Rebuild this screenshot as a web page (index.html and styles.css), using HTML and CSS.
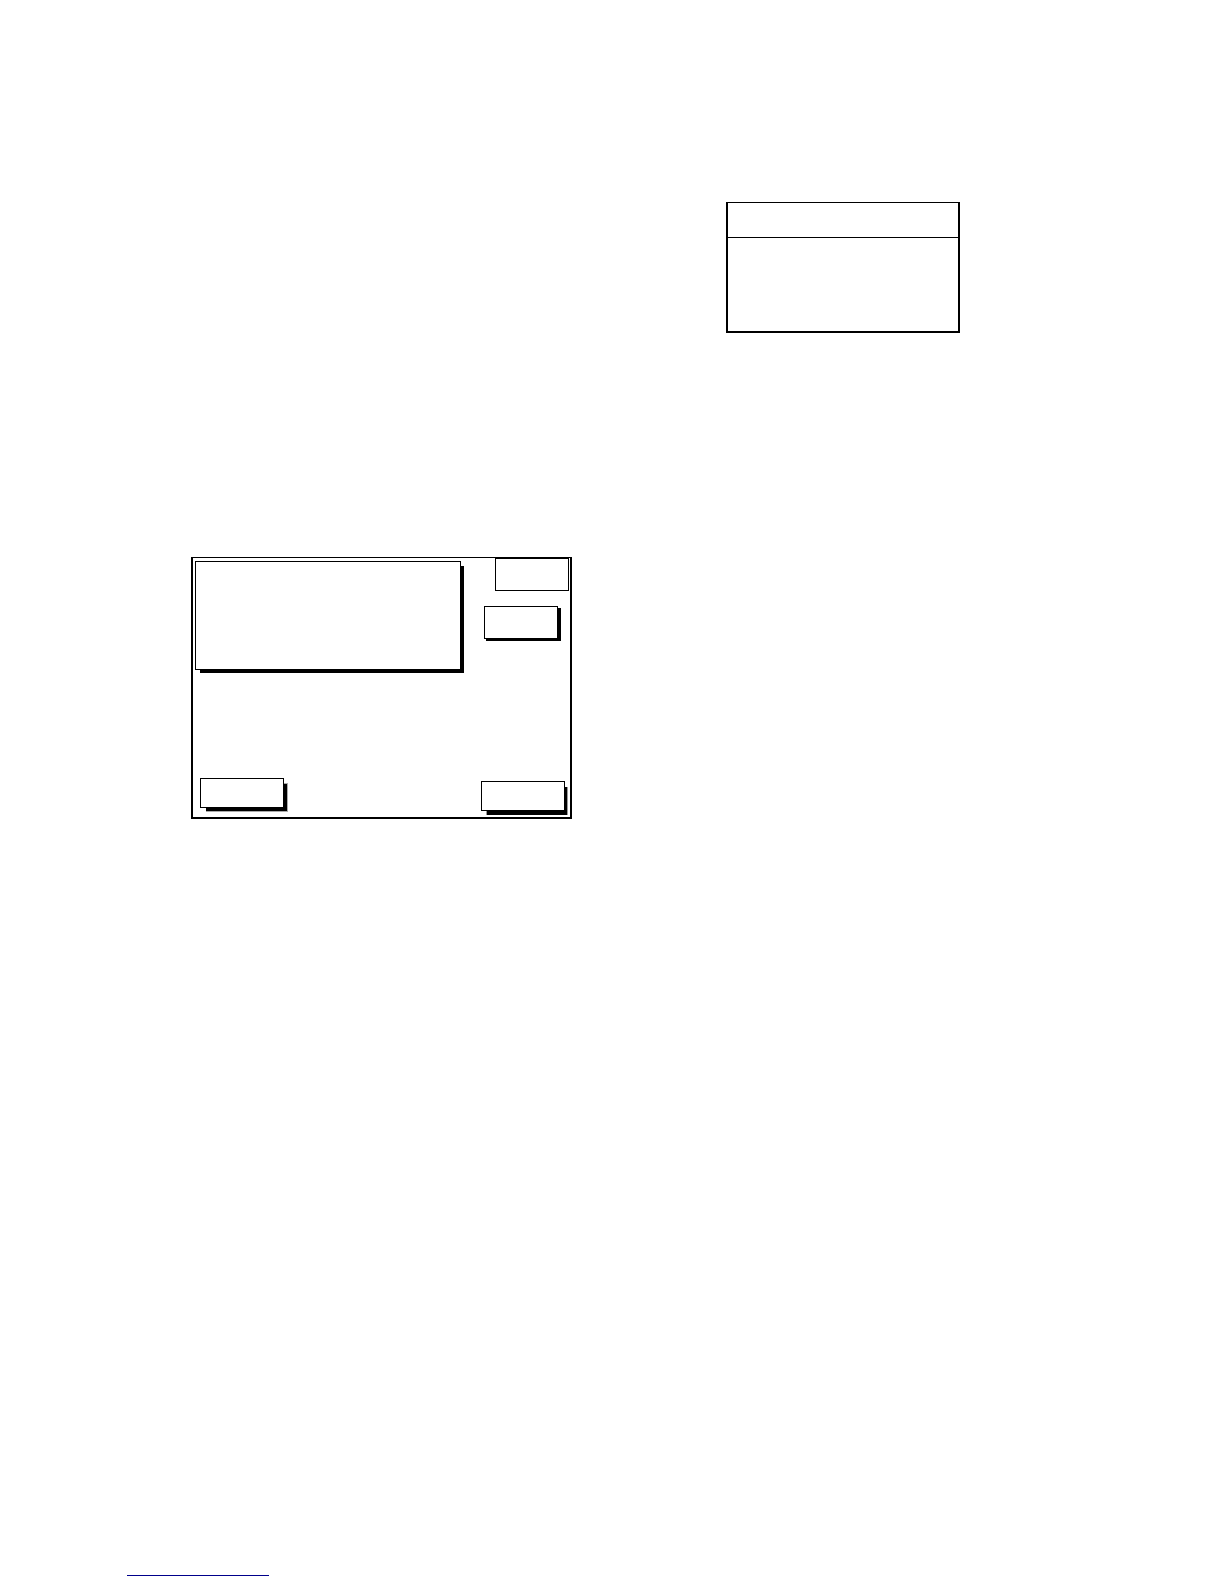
FILE: index.html
```html
<!DOCTYPE html>
<html lang="en">
<head>
<meta charset="utf-8">
<meta name="viewport" content="width=device-width, initial-scale=1">
<title>Form</title>
<link rel="stylesheet" href="styles.css">
</head>
<body>
<main class="boards">
  <section class="list-window">
    <header class="list-header"></header>
    <div class="list-body"></div>
  </section>
  <section class="dialog">
    <div class="dialog-top">
      <div class="message-panel"></div>
      <div class="side">
        <div class="status-box"></div>
        <button class="side-button" type="button" aria-label="Option"></button>
      </div>
    </div>
    <div class="dialog-actions">
      <button class="action action-left" type="button" aria-label="Back"></button>
      <button class="action action-right" type="button" aria-label="Continue"></button>
    </div>
  </section>
</main>
<footer class="page-footer">
  <a class="footer-link" href="#" aria-label="Website"></a>
</footer>
</body>
</html>
```
FILE: styles.css
```css
* {
  box-sizing: border-box;
}

body {
  display: flex;
  flex-direction: column;
  justify-content: space-between;
  min-height: 100vh;
  margin: 0;
  background: #fff;
  font-family: "Liberation Sans", Arial, sans-serif;
}

button {
  padding: 0;
  border: 1px solid #000;
  border-radius: 0;
  background: #fff;
}

.boards {
  display: grid;
  grid-template-columns: minmax(0, 381px) minmax(0, 234px);
  gap: 224px 154px;
  padding: 202px 24px 0 191px;
}

.list-window {
  grid-column: 2;
  border: 2px solid #000;
  border-top-width: 1px;
}

.list-header {
  height: 35px;
  border-bottom: 1px solid #000;
}

.list-body {
  height: 93px;
}

.dialog {
  display: flex;
  flex-direction: column;
  justify-content: space-between;
  grid-column: 1;
  min-height: 262px;
  border: 2px solid #000;
  border-top-width: 1px;
}

.dialog-top,
.dialog-actions {
  display: flex;
  justify-content: space-between;
}

.message-panel {
  width: 266px;
  height: 109px;
  margin: 3px 0 0 2px;
  border: 1px solid #000;
  background: #fff;
  box-shadow: 4px 4px 0 -1px #000;
}

.side {
  display: flex;
  flex-direction: column;
  align-items: flex-end;
  gap: 15px;
}

.status-box,
.side-button {
  width: 74px;
  height: 33px;
  border: 1px solid #000;
}

.status-box {
  margin-right: 1px;
}

.side-button {
  margin-right: 12px;
  box-shadow: 2px 2px 0 #000, 3px 2px 0 #000;
}

.dialog-actions {
  align-items: flex-end;
  padding: 0 5px 6px 7px;
}

.action {
  width: 84px;
  height: 30px;
}

/* Solid shadows with a thin grey edge */
.action-left {
  margin-bottom: 3px;
  box-shadow:
    4px 4px 0 -2px #000,
    5px 4px 0 -2px #000,
    4px 5px 0 -2px #000,
    5px 5px 0 -2px #000,
    5px 4px 0 -1px #aaa,
    5px 5px 0 -1px #aaa;
}

.action-right {
  box-shadow:
    4px 4px 0 -2px #000,
    4px 6px 0 -2px #000,
    4px 5px 0 -1px #999;
}

.page-footer {
  display: flex;
  padding: 0 24px 8px 127px;
}

.footer-link {
  width: 142px;
  height: 20px;
  border-bottom: 1px solid #00008b;
}
```
